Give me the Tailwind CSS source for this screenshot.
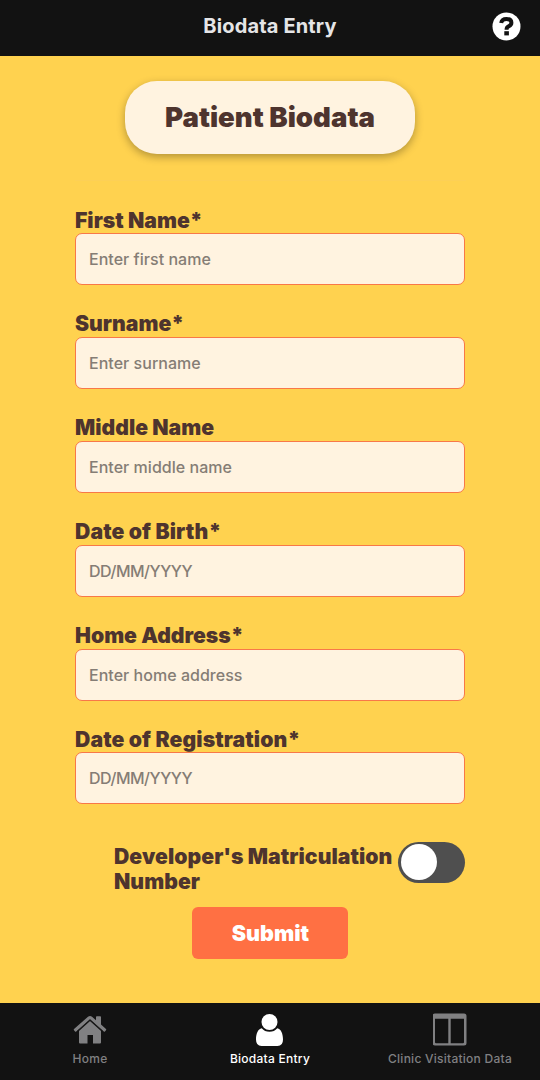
<!DOCTYPE html>
<html lang="en">
<head>
<meta charset="utf-8">
<title>Biodata Entry</title>
<script src="https://cdn.jsdelivr.net/npm/@tailwindcss/browser@4"></script>
</head>
<body class="w-[540px] h-[1080px] overflow-hidden flex flex-col bg-[#ffd24f] font-['Inter',sans-serif] text-[#4e342e]">
<header class="h-[55.5px] shrink-0 bg-[#121212] grid grid-cols-[1fr_auto_1fr] items-center px-[19px] pb-[3px]">
  <span></span>
  <h1 class="text-[20px] leading-6 font-bold tracking-[.15px] text-[#e5e5e7] whitespace-nowrap">Biodata Entry</h1>
  <svg class="justify-self-end w-[29px] h-[29px]" viewBox="0 0 29 29"><circle cx="14.5" cy="14.5" r="14" fill="#fff"/><path d="M9.2 11 Q9.8 7 14.5 7 Q19.4 7 19.4 10.8 Q19.4 13 17 14.1 Q14.6 15.2 14.6 17.2 V17.8" fill="none" stroke="#121212" stroke-width="4"/><rect x="12.3" y="19.2" width="4.6" height="4.2" fill="#121212"/></svg>
</header>
<main class="flex-1 flex flex-col items-center pt-[25.5px]">
  <div class="w-[290px] h-[72.5px] shrink-0 rounded-[32px] bg-[#fff3e0] shadow-[0_3px_8px_rgba(0,0,0,0.3)] flex items-center justify-center pt-px text-[27.6px] font-black whitespace-nowrap"><span>Patient Biodata</span></div>
  <div class="w-[391px] h-px mt-[26px] bg-[#fdd056]"></div>
  <form class="w-[391px] mt-[27px] flex flex-col">
    <div class="h-[103.9px]"><label class="block h-[25.5px] pl-[.5px] leading-[25px] text-[21.2px] font-black">First Name*</label><div class="h-[52px] w-[390.5px] rounded-[7px] border border-[#f87848] bg-[#fff3e0] px-[13.5px] flex items-center text-[16px] font-medium text-[#857d75]"><span class="tracking-[.03px]">Enter first name</span></div></div>
    <div class="h-[103.9px]"><label class="block h-[25.5px] pl-[.5px] leading-[25px] text-[21.2px] font-black">Surname*</label><div class="h-[52px] w-[390.5px] rounded-[7px] border border-[#f87848] bg-[#fff3e0] px-[13.5px] flex items-center text-[16px] font-medium text-[#857d75]"><span class="tracking-[.03px]">Enter surname</span></div></div>
    <div class="h-[103.9px]"><label class="block h-[25.5px] pl-[.5px] leading-[25px] text-[21.2px] font-black">Middle Name</label><div class="h-[52px] w-[390.5px] rounded-[7px] border border-[#f87848] bg-[#fff3e0] px-[13.5px] flex items-center text-[16px] font-medium text-[#857d75]"><span class="tracking-[.03px]">Enter middle name</span></div></div>
    <div class="h-[103.9px]"><label class="block h-[25.5px] pl-[.5px] leading-[25px] text-[21.2px] font-black tracking-[.1px]">Date of Birth*</label><div class="h-[52px] w-[390.5px] rounded-[7px] border border-[#f87848] bg-[#fff3e0] px-[13.5px] flex items-center text-[16px] font-medium text-[#857d75]"><span class="tracking-[-.5px]">DD/MM/YYYY</span></div></div>
    <div class="h-[103.9px]"><label class="block h-[25.5px] pl-[.5px] leading-[25px] text-[21.2px] font-black">Home Address*</label><div class="h-[52px] w-[390.5px] rounded-[7px] border border-[#f87848] bg-[#fff3e0] px-[13.5px] flex items-center text-[16px] font-medium text-[#857d75]"><span class="tracking-[.03px]">Enter home address</span></div></div>
    <div class="h-[103.9px]"><label class="block h-[25.5px] pl-[.5px] leading-[25px] text-[21.2px] font-black tracking-[.1px]">Date of Registration*</label><div class="h-[52px] w-[390.5px] rounded-[7px] border border-[#f87848] bg-[#fff3e0] px-[13.5px] flex items-center text-[16px] font-medium text-[#857d75]"><span class="tracking-[-.5px]">DD/MM/YYYY</span></div></div>
    <div class="mt-[11px] pl-[39.5px] pr-[.5px] flex justify-between">
      <div class="pt-[2px] text-[21.2px] leading-[25px] font-black tracking-[.05px] whitespace-nowrap">Developer's Matriculation<br>Number</div>
      <div class="w-[67px] h-[41px] rounded-full bg-[#4f4f4f] p-[2.5px] flex items-center shrink-0"><div class="w-[36px] h-[36px] rounded-full bg-white"></div></div>
    </div>
    <div class="mt-[13px] self-center w-[156px] h-[52px] rounded-[6px] bg-[#ff7043] text-white text-[21.5px] font-black flex items-center justify-center pl-px pt-px"><span>Submit</span></div>
  </form>
</main>
<nav class="h-[77.5px] shrink-0 bg-[#121212] grid grid-cols-3 text-[12px] leading-4 font-medium text-[#808082]">
  <div class="flex flex-col items-center pt-[10px]"><svg class="w-[34px] h-[34px]" viewBox="0 0 34 34" fill="currentColor"><path d="M17 7 L28 16.5 V29.5 Q28 30.5 27 30.5 H20 V22 H14.5 V30.5 H7 Q6 30.5 6 29.5 V16.5Z"/><path d="M17 3 Q18 3 19 3.8 L23 7.2 V4 Q23 3.2 23.8 3.2 H27.2 Q28 3.2 28 4 V11.5 L33 16 Q33.6 16.6 33 17.2 L31.9 18.4 Q31.4 18.9 30.8 18.4 L17 6.2 L3.2 18.4 Q2.6 18.9 2.1 18.4 L1 17.2 Q.4 16.6 1 16 L15 3.8 Q16 3 17 3Z"/><path d="M4.5 18.5 L17 7.3 29.5 18.5" fill="none" stroke="#121212" stroke-width="1.1"/></svg><span class="mt-[4px] tracking-[.3px]">Home</span></div>
  <div class="flex flex-col items-center pt-[10px] text-white"><svg class="w-[34px] h-[34px]" viewBox="0 0 34 34" fill="currentColor"><circle cx="16.5" cy="9" r="8"/><path d="M8.7 15.3 Q11.7 18.8 16.5 18.8 T24.3 15.3 C28 16 30 20.8 30 26.5 Q30 33 24.5 33 H8.5 Q3 33 3 26.5 C3 20.8 5 16 8.7 15.3Z"/></svg><span class="mt-[4px] tracking-[.25px]">Biodata Entry</span></div>
  <div class="flex flex-col items-center pt-[10px]"><svg class="w-[34px] h-[34px]" viewBox="0 0 34 34" fill="currentColor"><path fill-rule="evenodd" d="M2.5 0 H31.5 Q34 0 34 2.5 V29.5 Q34 32 31.5 32 H2.5 Q0 32 0 29.5 V2.5 Q0 0 2.5 0Z M2.5 5.2 V28.6 Q2.5 29.6 3.5 29.6 H15.8 V5.2Z M18.2 5.2 V29.6 H30.5 Q31.5 29.6 31.5 28.6 V5.2Z" transform="translate(-.5 .6)"/></svg><span class="mt-[4px] tracking-[.25px]">Clinic Visitation Data</span></div>
</nav>
</body>
</html>
